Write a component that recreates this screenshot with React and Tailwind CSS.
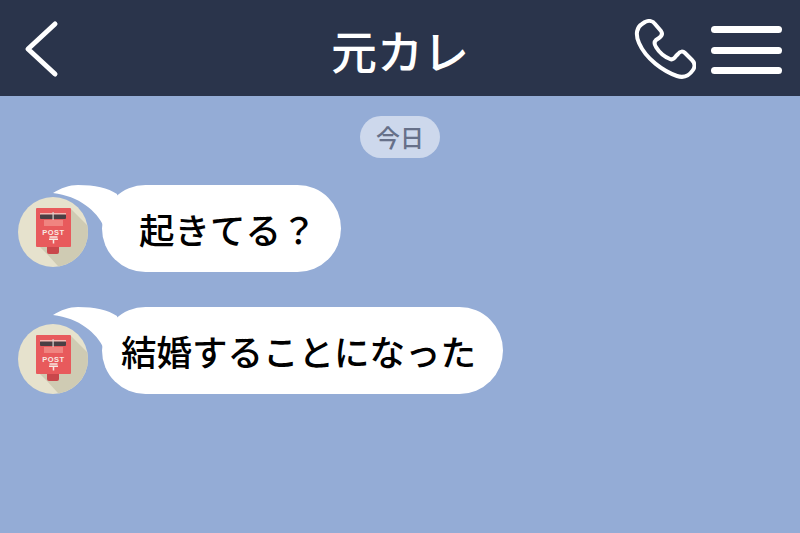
import React from 'react';

const jp = { fontFamily: '"Noto Sans CJK JP", "Noto Sans", sans-serif' };

const messages = [
  { id: 1, text: '起きてる？', width: 'w-[239px]', pad: 'pl-[37px]', lift: 'mb-[5px]' },
  { id: 2, text: '結婚することになった', width: 'w-[401px]', pad: 'pl-[19px]', lift: 'mb-0' },
];

const PostAvatar = ({ id }) => (
  <svg width="70" height="70" viewBox="0 0 70 70" className="shrink-0">
    <defs>
      <clipPath id={`avatarClip${id}`}>
        <circle cx="35" cy="35" r="35" />
      </clipPath>
    </defs>
    <circle cx="35" cy="35" r="35" fill="#e6e2cd" />
    <g clipPath={`url(#avatarClip${id})`}>
      <path d="M53 12 L80 39 L80 80 L50 80 L29 57 L18 46 Z" fill="#cfcbb3" />
    </g>
    <rect x="29" y="48" width="12" height="9" rx="2" fill="#c9474b" />
    <rect x="18" y="11" width="35" height="39" rx="1" fill="#e85a5c" />
    <rect x="22" y="17" width="26" height="5" rx="1" fill="#4a3f44" />
    <rect x="22" y="16" width="26" height="1.5" fill="#f4b9b3" />
    <rect x="34.5" y="15" width="1.2" height="8" fill="#d9d4d0" />
    <rect x="26" y="23" width="19" height="6" fill="#f08480" />
    <text x="35.5" y="37.5" textAnchor="middle" fontSize="7.5" fontWeight="700" fill="#f8e9e2" fontFamily="Liberation Sans, sans-serif" letterSpacing="0.5">POST</text>
    <path d="M31.5 40 H39.5 M31 42.2 H40 M35.5 42.2 V46.5" stroke="#f8e9e2" strokeWidth="1.5" fill="none" />
  </svg>
);

const Tail = () => (
  <svg width="80" height="50" viewBox="0 0 80 50" className="absolute left-[-49px] top-0">
    <path d="M0 8 C8 3 16 0 25 0 C42 0 55 3 64 9 L70 50 L51 42 C44 26 26 11 0 8 Z" fill="#ffffff" />
  </svg>
);

const Message = ({ id, text, width, pad, lift }) => (
  <div className="flex items-end pl-[18px]">
    <div className={lift}>
      <PostAvatar id={id} />
    </div>
    <div className={`relative ml-[14px] flex h-[87px] items-center rounded-[44px] bg-white text-[35.5px] font-medium leading-none text-black ${width} ${pad}`}>
      <Tail />
      <span className="relative">{text}</span>
    </div>
  </div>
);

const App = () => {
  return (
    <div className="flex h-[533px] w-[800px] flex-col overflow-hidden bg-[#94acd6]" style={jp}>
      <header className="relative flex h-[96px] shrink-0 items-center justify-between bg-[#2a344b] pl-[24px] pr-[18px]">
        <svg width="36" height="58" viewBox="0 0 36 58" fill="none" stroke="#ffffff" strokeWidth="5" strokeLinecap="round" strokeLinejoin="round" className="mt-[2px]">
          <path d="M31 4 L4 29 L31 54" />
        </svg>
        <h1 className="absolute inset-x-0 mt-[1px] text-center text-[46px] font-medium leading-none text-white">元カレ</h1>
        <div className="mt-[4px] flex items-center gap-[15px]">
          <svg width="62" height="62" viewBox="0 0 62 62" fill="none" stroke="#ffffff" strokeWidth="4" strokeLinejoin="round" className="ml-[1px]">
            <path d="M11 3 C15 1 19 2 21 5 L27 12 C29 15 28 17 25 19 L22 21 C20 23 20 25 22 28 C25 33 31 38 36 40 C38 41 40 40 42 37 L44 35 C46 32 49 32 51 34 L58 41 C61 44 61 48 59 51 C55 57 49 59 43 57 C29 52 12 40 5 24 C1 15 3 8 8 5 Z" />
          </svg>
          <div className="flex w-[71px] flex-col gap-[13.5px]">
            <div className="h-[7px] rounded-full bg-white" />
            <div className="h-[7px] rounded-full bg-white" />
            <div className="h-[7px] rounded-full bg-white" />
          </div>
        </div>
      </header>

      <div className="flex justify-center pt-[20px]">
        <span className="flex h-[42px] w-[80px] items-center justify-center rounded-full bg-[#cdd8ec] text-[24px] font-medium leading-none text-[#667089]">今日</span>
      </div>

      <div className="mt-[27px] flex flex-col gap-[35px]">
        {messages.map((m) => (
          <Message key={m.id} id={m.id} text={m.text} width={m.width} pad={m.pad} lift={m.lift} />
        ))}
      </div>
    </div>
  );
};

export default App;
